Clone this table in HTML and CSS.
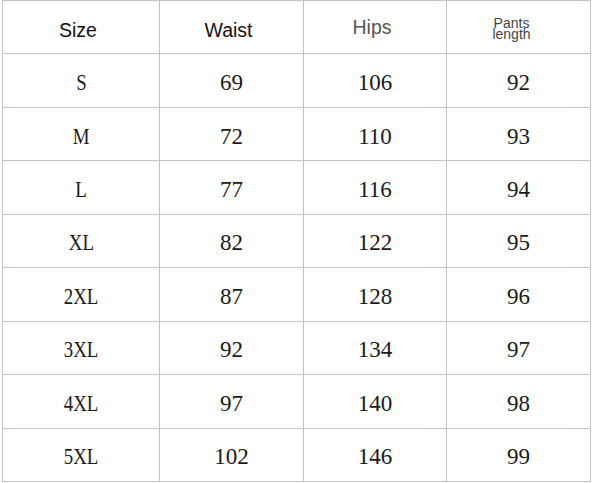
FILE: index.html
```html
<!DOCTYPE html>
<html>
<head>
<meta charset="utf-8">
<link rel="stylesheet" href="styles.css">
</head>
<body>
<div class="chart">
  <div class="cell head">Size</div>
  <div class="cell head">Waist</div>
  <div class="cell head gray">Hips</div>
  <div class="cell head small">Pants<br>length</div>

  <div class="cell"><span class="sz">S</span></div><div class="cell">69</div><div class="cell">106</div><div class="cell">92</div>
  <div class="cell"><span class="sz">M</span></div><div class="cell">72</div><div class="cell">110</div><div class="cell">93</div>
  <div class="cell"><span class="sz">L</span></div><div class="cell">77</div><div class="cell">116</div><div class="cell">94</div>
  <div class="cell"><span class="sz">XL</span></div><div class="cell">82</div><div class="cell">122</div><div class="cell">95</div>
  <div class="cell"><span class="sz">2XL</span></div><div class="cell">87</div><div class="cell">128</div><div class="cell">96</div>
  <div class="cell"><span class="sz">3XL</span></div><div class="cell">92</div><div class="cell">134</div><div class="cell">97</div>
  <div class="cell"><span class="sz">4XL</span></div><div class="cell">97</div><div class="cell">140</div><div class="cell">98</div>
  <div class="cell"><span class="sz">5XL</span></div><div class="cell">102</div><div class="cell">146</div><div class="cell">99</div>
</div>
</body>
</html>
```

FILE: styles.css
```css
html, body {
  margin: 0;
  padding: 0;
  background: #ffffff;
}

.chart {
  margin-left: 2px;
  width: 589px;
  height: 482px;
  box-sizing: border-box;
  padding: 1px;
  gap: 1px;
  background: #bfc3cc;
  display: grid;
  grid-template-columns: 156px 143px 142px 143px;
  grid-template-rows: repeat(9, 1fr);
}

.cell {
  background: #ffffff;
  display: flex;
  align-items: center;
  justify-content: center;
  padding-top: 5px;
  box-sizing: border-box;
  font-family: "Liberation Serif", serif;
  font-size: 23px;
  color: #1a1a1a;
}

.head {
  font-family: "Liberation Sans", Arial, sans-serif;
  font-size: 19.5px;
  color: #111111;
  padding-top: 6px;
  padding-right: 6px;
}

.head.gray {
  color: #555555;
  padding-top: 0;
}

.head.small {
  display: flex;
  flex-direction: column;
  font-size: 14px;
  line-height: 11.5px;
  color: #444444;
  text-align: center;
  padding-top: 4px;
  padding-right: 14px;
}

.sz {
  display: inline-block;
  transform: scaleX(0.82);
}
```
